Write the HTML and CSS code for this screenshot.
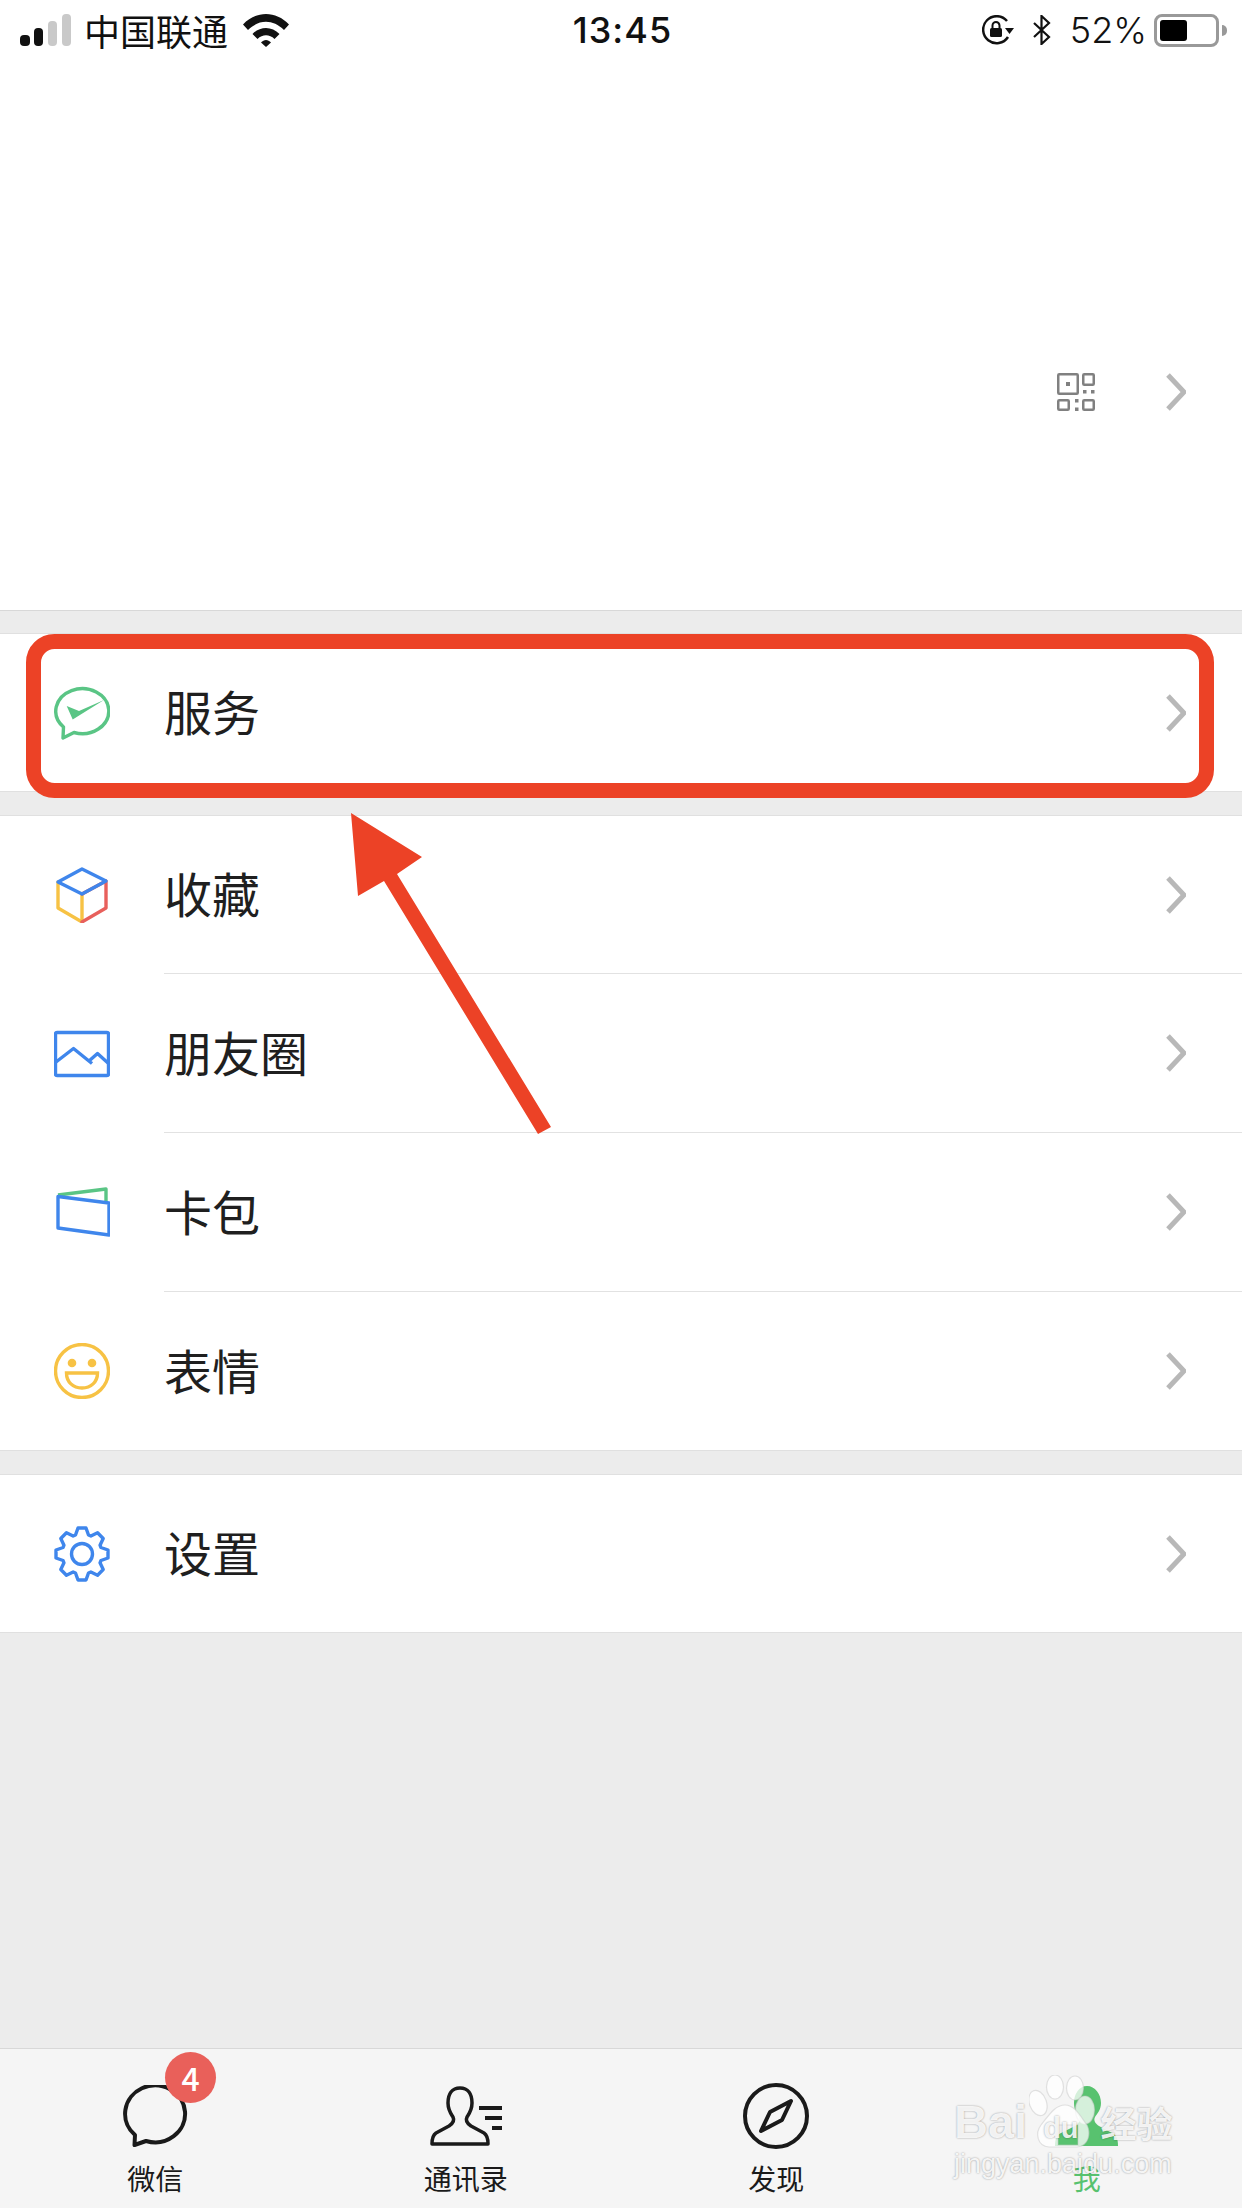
FILE: index.html
```html
<!DOCTYPE html>
<html>
<head>
<meta charset="utf-8">
<title>我</title>
<link rel="stylesheet" href="styles.css">
</head>
<body>
	<div class="page">
		<div class="header">
			<div class="statusbar">
				<div class="status-left">
					<svg width="51" height="32" viewBox="0 0 51 32">
						<rect x="0" y="21" width="10" height="11" rx="4" fill="#111"/>
						<rect x="14" y="14" width="9" height="18" rx="4" fill="#111"/>
						<rect x="28" y="7" width="9" height="25" rx="4" fill="#c9c9c9"/>
						<rect x="42" y="0" width="9" height="32" rx="4" fill="#c9c9c9"/>
					</svg>
					<span class="carrier">中国联通</span>
					<svg class="wifi" width="46" height="34" viewBox="0 0 46 34">
						<path d="M0 11.5 C13 -2.5 33 -2.5 46 11.5 L41 17 C30 6 16 6 5 17 Z" fill="#111"/>
						<path d="M9.5 21 C17 13 29 13 36.5 21 L31.5 26 C26.500 21 19.500 21 14.500 26 Z" fill="#111"/>
						<path d="M18 29.500 C21 26 25 26 28 29.500 L23 34 Z" fill="#111"/>
					</svg>
				</div>
				<div class="time">13:45</div>
				<div class="status-right">
					<svg width="32" height="30" viewBox="0 0 32 30">
						<path d="M26 22 A13.500 13.500 0 1 1 25 6" fill="none" stroke="#111" stroke-width="2.500"/>
						<path d="M23 13 H32 L27.500 19 Z" fill="#111"/>
						<rect x="8" y="13" width="12" height="9" rx="1.500" fill="#111"/>
						<path d="M10.500 13 V10.500 A3.500 3.500 0 0 1 17.500 10.500 V13" fill="none" stroke="#111" stroke-width="2"/>
					</svg>
					<svg width="18" height="30" viewBox="0 0 18 30">
						<path d="M1 8 L16 22 L8.500 29 V1 L16 8 L1 22" fill="none" stroke="#111" stroke-width="2.200"/>
					</svg>
					<span class="battery-text">52%</span>
					<div class="battery">
						<div class="battery-body"><div class="battery-fill"></div></div>
						<div class="battery-tip"></div>
					</div>
				</div>
			</div>
			<div class="profile">
				<svg class="qr" width="38" height="38" viewBox="0 0 38 38">
					<g fill="none" stroke="#808080" stroke-width="2.500">
						<rect x="1.250" y="1.250" width="19.500" height="19.500" rx="1"/>
						<rect x="26.250" y="1.250" width="10.500" height="10.500" rx="1"/>
						<rect x="1.250" y="27.250" width="10.500" height="9.500" rx="1"/>
						<rect x="26.250" y="27.250" width="10.500" height="9.500" rx="1"/>
					</g>
					<g fill="#808080">
						<rect x="9" y="9" width="4" height="4"/>
						<rect x="26" y="17" width="3.500" height="3.500"/>
						<rect x="34" y="17" width="3.500" height="3.500"/>
						<rect x="18" y="26" width="3.500" height="3.500"/>
						<rect x="18" y="34.500" width="3.500" height="3.500"/>
					</g>
				</svg>
				<svg class="chevron" width="20" height="38" viewBox="0 0 20 38"><path d="M2 2 L18 19 L2 36"/></svg>
			</div>
		</div>

		<div class="section">
			<div class="row">
				<svg class="row-icon" width="56" height="56" viewBox="0 0 56 56">
					<path d="M9.500 42 A26.500 22.500 0 1 1 20 47.500 L9 53 Z" fill="none" stroke="#5ac585" stroke-width="3.400" stroke-linejoin="round"/>
					<path d="M12.700 21 L25 26 L50 15 L18.700 34.500 Z" fill="#5ac585"/>
				</svg>
				<span class="row-label">服务</span>
				<svg class="chevron" width="20" height="38" viewBox="0 0 20 38"><path d="M2 2 L18 19 L2 36"/></svg>
			</div>
		</div>

		<div class="section">
			<div class="row">
				<svg class="row-icon" width="56" height="56" viewBox="0 0 56 56">
					<g fill="none" stroke-width="3.400" stroke-linejoin="round" stroke-linecap="round">
						<path d="M4 15 V41 L28 55 V27" stroke="#f7c244"/>
						<path d="M28 27 L52 14 V41 L28 55" stroke="#e8605c"/>
						<path d="M28 2 L52 14 L28 27 L4 15 Z" stroke="#3f86ec"/>
					</g>
				</svg>
				<span class="row-label">收藏</span>
				<svg class="chevron" width="20" height="38" viewBox="0 0 20 38"><path d="M2 2 L18 19 L2 36"/></svg>
			</div>
			<div class="row">
				<svg class="row-icon" width="56" height="56" viewBox="0 0 56 56">
					<g fill="none" stroke="#3f86ec" stroke-width="3.400" stroke-linejoin="round">
						<rect x="1.500" y="7.500" width="53" height="43" rx="1.500"/>
						<path d="M2 37 L19.500 23.500 L38 38.500 M35 36 L43.500 28.500 L54 38"/>
					</g>
				</svg>
				<span class="row-label">朋友圈</span>
				<svg class="chevron" width="20" height="38" viewBox="0 0 20 38"><path d="M2 2 L18 19 L2 36"/></svg>
			</div>
			<div class="row">
				<svg class="row-icon" width="56" height="56" viewBox="0 0 56 56">
					<g fill="none" stroke-width="3.400" stroke-linejoin="round">
						<path d="M4 11 L52 5 V18" stroke="#5ac585"/>
						<path d="M4 12.500 L55 19 V51 L4 44 Z" stroke="#3f86ec"/>
					</g>
				</svg>
				<span class="row-label">卡包</span>
				<svg class="chevron" width="20" height="38" viewBox="0 0 20 38"><path d="M2 2 L18 19 L2 36"/></svg>
			</div>
			<div class="row">
				<svg class="row-icon" width="56" height="56" viewBox="0 0 56 56">
					<circle cx="28" cy="28" r="26.500" fill="none" stroke="#f7c244" stroke-width="3.400"/>
					<circle cx="18" cy="20" r="4.300" fill="#f7c244"/>
					<circle cx="38" cy="20" r="4.300" fill="#f7c244"/>
					<path d="M12.500 30 H43.500 C43.500 39 37 45 28 45 C19 45 12.500 39 12.500 30 Z" fill="none" stroke="#f7c244" stroke-width="3.400"/>
				</svg>
				<span class="row-label">表情</span>
				<svg class="chevron" width="20" height="38" viewBox="0 0 20 38"><path d="M2 2 L18 19 L2 36"/></svg>
			</div>
		</div>

		<div class="section">
			<div class="row">
				<svg class="row-icon" width="56" height="56" viewBox="0 0 56 56">
					<g fill="none" stroke="#3f86ec" stroke-width="3.400" stroke-linejoin="round">
						<polygon points="21.500,9 24,2 32,2 34.500,9 36.840,9.970 43.560,6.790 49.210,12.440 46.030,19.160 47,21.500 54,24 54,32 47,34.500 46.030,36.840 49.210,43.560 43.560,49.210 36.840,46.030 34.500,47 32,54 24,54 21.500,47 19.160,46.030 12.440,49.210 6.790,43.560 9.970,36.840 9,34.500 2,32 2,24 9,21.500 9.970,19.160 6.790,12.440 12.440,6.790 19.160,9.970"/>
						<circle cx="28" cy="28" r="10.500"/>
					</g>
				</svg>
				<span class="row-label">设置</span>
				<svg class="chevron" width="20" height="38" viewBox="0 0 20 38"><path d="M2 2 L18 19 L2 36"/></svg>
			</div>
		</div>

		<div class="tabbar">
			<div class="tab">
				<div class="tab-icon">
					<svg width="66" height="62" viewBox="0 0 66 62">
						<path d="M13 50 A30 28.500 0 1 1 24 56 L12.500 60 Z" fill="none" stroke="#1a1a1a" stroke-width="4" stroke-linejoin="round"/>
					</svg>
				</div>
				<span class="tab-label">微信</span>
				<span class="badge">4</span>
			</div>
			<div class="tab">
				<div class="tab-icon">
					<svg width="73" height="60" viewBox="0 0 73 60">
						<path d="M31 2 C23 2 19 8 19 17 C19 24 22 28 24 31 C26 35 23 38 20 40 L7 47 C4 49 3 52 3 58 H59 C59 52 58 49 55 47 L42 40 C39 38 36 35 38 31 C40 28 43 24 43 17 C43 8 39 2 31 2 Z" fill="none" stroke="#1a1a1a" stroke-width="3.500" stroke-linejoin="round"/>
						<path d="M50 22 H73 M56 32 H73 M63 42 H73" stroke="#1a1a1a" stroke-width="4"/>
					</svg>
				</div>
				<span class="tab-label">通讯录</span>
			</div>
			<div class="tab">
				<div class="tab-icon">
					<svg width="66" height="66" viewBox="0 0 66 66">
						<circle cx="33" cy="33" r="31" fill="none" stroke="#1a1a1a" stroke-width="4"/>
						<polygon points="48,18 39,37 18,48 27,29" fill="none" stroke="#1a1a1a" stroke-width="4" stroke-linejoin="round"/>
					</svg>
				</div>
				<span class="tab-label">发现</span>
			</div>
			<div class="tab">
				<div class="tab-icon">
					<svg width="63" height="60" viewBox="0 0 63 60">
						<path d="M32 0 C24 0 19 8 19 17 C19 24 22 28 24 31 C26 35 23 38 20 40 L6 47 C2 49 0 52 0 60 H63 C63 52 61 49 57 47 L44 40 C41 38 38 35 40 31 C42 28 46 24 46 17 C46 8 40 0 32 0 Z" fill="#58c26f"/>
					</svg>
				</div>
				<span class="tab-label tab-label-on">我</span>
			</div>

			<div class="watermark">
				<svg class="paw" width="72" height="74" viewBox="0 0 72 74">
					<g fill="#fff" fill-opacity="0.75" stroke="#c8c8c8" stroke-opacity="0.5" stroke-width="1.200">
						<ellipse cx="9" cy="28" rx="8.500" ry="13" transform="rotate(-20 9 28)"/>
						<ellipse cx="26" cy="12" rx="8.500" ry="12"/>
						<ellipse cx="46" cy="13" rx="8.500" ry="12"/>
						<ellipse cx="56" cy="35" rx="9.500" ry="14"/>
						<path fill-rule="evenodd" d="M36 30 C46 30 52 42 58 50 C62 58 60 71 48 72 H20 C8 71 6 58 12 50 C20 40 26 30 36 30 Z M29 50 H49 V70 H29 Z"/>
					</g>
				</svg>
				<div class="wm-main">
					<span class="wm-bai">Bai</span>
					<span class="wm-du">du</span>
					<span class="wm-cn">经验</span>
				</div>
				<div class="wm-url">jingyan.baidu.com</div>
			</div>
		</div>

		<svg class="markup" width="1242" height="2208" viewBox="0 0 1242 2208">
			<rect x="33.500" y="641.500" width="1173" height="149" rx="21" fill="none" stroke="#ec4226" stroke-width="15"/>
			<polygon points="351,813 422,857 397,874 551,1127 538,1134 384,881 358,896" fill="#ec4226"/>
		</svg>
	</div>
</body>
</html>
```

FILE: styles.css
```css
* {
  margin: 0;
  padding: 0;
  box-sizing: border-box;
}

body {
  font-family: "Noto Sans CJK SC", "Noto Sans", sans-serif;
  background: #ececec;
  color: #1a1a1a;
}

svg {
  display: block;
  flex-shrink: 0;
}

.page {
  position: relative;
  width: 1242px;
  height: 2208px;
  display: flex;
  flex-direction: column;
  overflow: hidden;
}

.header {
  height: 611px;
  background: #fff;
  border-bottom: 1px solid #d8d8d8;
  display: flex;
  flex-direction: column;
}

.statusbar {
  height: 60px;
  display: grid;
  grid-template-columns: 1fr auto 1fr;
  align-items: center;
  padding: 0 15px 0 20px;
  color: #111;
}

.status-left {
  display: flex;
  align-items: center;
  gap: 13px;
}

.wifi {
  margin-left: 2px;
}

.carrier {
  font-size: 36px;
  line-height: 40px;
}

.time {
  font-family: Inter, sans-serif;
  font-size: 36px;
  font-weight: 500;
  letter-spacing: 1px;
  margin-right: 2px;
}

.status-right {
  display: flex;
  align-items: center;
  justify-content: flex-end;
  gap: 19px;
}

.battery-text {
  font-family: Inter, sans-serif;
  font-size: 36px;
  font-weight: 300;
  margin-right: -12px;
}

.battery {
  display: flex;
  align-items: center;
  gap: 3px;
}

.battery-body {
  width: 65px;
  height: 33px;
  border: 3px solid #999;
  border-radius: 8px;
  padding: 3px;
}

.battery-fill {
  width: 27px;
  height: 100%;
  background: #000;
  border-radius: 3px;
}

.battery-tip {
  width: 5px;
  height: 11px;
  background: #999;
  border-radius: 0 5px 5px 0;
}

.profile {
  flex: 1;
  display: flex;
  align-items: center;
  justify-content: flex-end;
  gap: 71px;
  padding: 114px 56px 0 0;
}

.chevron path {
  fill: none;
  stroke: #b8b8b8;
  stroke-width: 5;
}

.section {
  margin-top: 23px;
  background: #fff;
  border-top: 1px solid #e0e0e0;
  border-bottom: 1px solid #e0e0e0;
}

.header + .section {
  margin-top: 22px;
}

.row {
  height: 157px;
  display: flex;
  align-items: center;
  padding: 0 56px 0 54px;
  position: relative;
}

.row + .row {
  height: 159px;
  padding-top: 1px;
}

/* divider starts under the label, not at the screen edge */
.row + .row::before {
  content: "";
  position: absolute;
  left: 164px;
  right: 0;
  top: 0;
  height: 1px;
  background: #e2e2e2;
}

.row-icon {
  margin-right: 54px;
}

.row-label {
  flex: 1;
  font-size: 48px;
  line-height: 64px;
  padding-bottom: 5px;
  color: #1f1f1f;
}

.tabbar {
  margin-top: auto;
  height: 160px;
  background: #f5f5f5;
  border-top: 1px solid #d8d8d8;
  display: grid;
  grid-template-columns: repeat(4, 1fr);
  position: relative;
}

.tab {
  position: relative;
  display: flex;
  flex-direction: column;
  align-items: center;
  padding-top: 34px;
}

.tab-icon {
  height: 66px;
  display: flex;
  align-items: center;
  justify-content: center;
}

.tab-label {
  margin-top: 13px;
  font-size: 28px;
  line-height: 32px;
  color: #1a1a1a;
}

.tab-label-on {
  color: #58c26f;
}

.badge {
  position: absolute;
  left: 165px;
  top: 3px;
  width: 51px;
  height: 51px;
  border-radius: 50%;
  background: #e9605a;
  color: #fff;
  font-size: 32px;
  font-weight: 500;
  line-height: 51px;
  text-align: center;
}

.watermark {
  position: absolute;
  left: 954px;
  top: 26px;
  width: 230px;
  height: 110px;
  color: rgba(255, 255, 255, 0.88);
  text-shadow: 0 0 2px rgba(0, 0, 0, 0.4);
  font-family: "Liberation Sans", sans-serif;
}

.paw {
  position: absolute;
  left: 75px;
  top: 0;
}

.wm-main {
  position: relative;
  margin-top: 19px;
  height: 56px;
  display: flex;
  align-items: baseline;
  font-weight: 700;
  line-height: 56px;
  white-space: nowrap;
}

.wm-bai {
  font-size: 47px;
}

.wm-du {
  margin-left: 16px;
  font-size: 29px;
}

.wm-cn {
  margin-left: 22px;
  font-family: "Noto Sans CJK SC", sans-serif;
  font-size: 36px;
}

.wm-url {
  position: relative;
  margin-top: -2px;
  font-size: 27px;
  line-height: 32px;
  white-space: nowrap;
}

.markup {
  position: absolute;
  left: 0;
  top: 0;
  pointer-events: none;
}
```
